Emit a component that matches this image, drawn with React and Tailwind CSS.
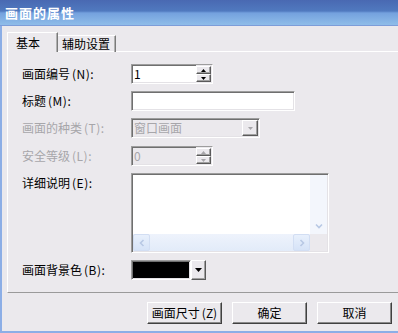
import React from "react";

const FONT = { fontFamily: '"Noto Sans CJK SC", "Noto Sans", sans-serif' };

const sunken =
  "border border-t-[#9d9d9d] border-l-[#9d9d9d] border-b-white border-r-white shadow-[inset_1px_1px_0_#6f6f6f,inset_-1px_-1px_0_#e4e2e6]";
const raised =
  "border border-t-white border-l-white border-b-[#5a5a5a] border-r-[#5a5a5a] shadow-[inset_-1px_-1px_0_#a0a0a0]";

function Tri({ up, color = "#000" }) {
  return (
    <svg width="5" height="3" viewBox="0 0 5 3">
      {up ? (
        <polygon points="0,3 5,3 2.5,0" fill={color} />
      ) : (
        <polygon points="0,0 5,0 2.5,3" fill={color} />
      )}
    </svg>
  );
}

function Spinner({ value, disabled }) {
  return (
    <div className={`flex w-[82px] h-[20px] ${sunken} ${disabled ? "bg-[#ebe9ed]" : "bg-white"}`}>
      <div
        className={`flex-1 pl-[2px] text-[12px] leading-[18px] ${disabled ? "text-[#a7a6aa]" : "text-black"}`}
      >
        {value}
      </div>
      <div className="w-[16px] flex flex-col bg-[#ebe9ed] py-[1px] pr-[1px]">
        <div className={`flex-1 flex items-center justify-center ${raised}`}>
          <Tri up color={disabled ? "#a7a6aa" : "#000"} />
        </div>
        <div className={`flex-1 flex items-center justify-center ${raised}`}>
          <Tri color={disabled ? "#a7a6aa" : "#000"} />
        </div>
      </div>
    </div>
  );
}

function Label({ text, keyc, disabled, top }) {
  return (
    <div
      className={`w-[109px] shrink-0 text-[12px] leading-[14px] ${top ? "pt-[3px]" : "self-center"} ${
        disabled ? "text-[#a7a6aa]" : "text-black"
      }`}
    >
      {text}
      <span className="ml-[2px] tracking-[0.5px]">({keyc}):</span>
    </div>
  );
}

function Chev({ dir }) {
  return (
    <svg width="8" height="8" viewBox="0 0 8 8">
      {dir === "l" ? (
        <polyline points="5.5,1 2.5,4 5.5,7" fill="none" stroke="#b8c8e4" strokeWidth="1.6" />
      ) : (
        <polyline points="2.5,1 5.5,4 2.5,7" fill="none" stroke="#b8c8e4" strokeWidth="1.6" />
      )}
    </svg>
  );
}

function Button({ children, w = "w-[75px]" }) {
  return (
    <div
      className={`${w} h-[22px] flex items-center justify-center text-[12px] text-black bg-[#ebe9ed] border border-t-white border-l-white border-b-[#404040] border-r-[#404040] shadow-[inset_-1px_-1px_0_#8a8a8a]`}
    >
      {children}
    </div>
  );
}

export default function App() {
  return (
    <div
      className="w-[398px] h-[333px] overflow-hidden bg-[#ebe9ed] flex flex-col"
      style={FONT}
    >
      {/* title bar */}
      <div className="h-[26px] shrink-0 flex items-center pl-[5px] border-b border-[#7d9dd9] bg-[linear-gradient(to_bottom,#4969b2_0%,#5079bf_44%,#74a1de_52%,#8fbde9_100%)]">
        <span className="text-white font-bold text-[13px] tracking-[1px] leading-none">画面的属性</span>
      </div>

      <div className="flex-1 flex">
        <div className="w-[2px] bg-[#8caee6] shrink-0" />
        <div className="flex-1 flex flex-col">
          {/* tabs */}
          <div className="flex items-end ml-[5px] mt-[6px] -mb-px relative z-10">
            <div className="w-[51px] h-[20px] pl-[8px] pt-[2px] text-[12px] leading-[16px] text-black bg-[#ebe9ed] border-t border-l border-white border-r border-r-[#7a7a7a] shadow-[inset_-1px_0_0_#b0b0b0]">
              基本
            </div>
            <div className="w-[58px] h-[17px] pl-[4px] text-[12px] leading-[16px] text-black border-t border-white border-r border-r-[#7a7a7a] shadow-[inset_-1px_0_0_#b0b0b0]">
              辅助设置
            </div>
          </div>

          {/* panel */}
          <div className="ml-[5px] -mr-[10px] h-[242px] border-t border-l border-white border-b border-b-[#9a9a9a] flex flex-col pl-[14px]">
            <div className="flex mt-[12px] h-[20px]">
              <Label text="画面编号" keyc="N" />
              <Spinner value="1" />
            </div>
            <div className="flex mt-[7px] h-[20px]">
              <Label text="标题" keyc="M" />
              <div className={`w-[164px] h-[20px] bg-white ${sunken}`} />
            </div>
            <div className="flex mt-[7px] h-[20px]">
              <Label text="画面的种类" keyc="T" disabled />
              <div className={`w-[129px] h-[20px] flex bg-[#ebe9ed] ${sunken}`}>
                <div className="flex-1 pl-[2px] text-[12px] leading-[18px] text-[#a7a6aa]">窗口画面</div>
                <div className={`w-[16px] my-[1px] mr-[1px] flex items-center justify-center ${raised}`}>
                  <Tri color="#a7a6aa" />
                </div>
              </div>
            </div>
            <div className="flex mt-[8px] h-[20px]">
              <Label text="安全等级" keyc="L" disabled />
              <Spinner value="0" disabled />
            </div>
            <div className="flex mt-[7px] h-[80px]">
              <Label text="详细说明" keyc="E" top />
              <div className={`w-[198px] h-[80px] bg-white flex flex-col ${sunken}`}>
                <div className="flex-1 flex">
                  <div className="flex-1" />
                  <div className="w-[17px] mr-[1px] mt-[1px] flex flex-col justify-end items-center bg-[#f3f6fc]">
                    <div className="w-[17px] h-[17px] flex items-center justify-center">
                      <svg width="8" height="8" viewBox="0 0 8 8">
                        <polyline points="1,2.5 4,5.5 7,2.5" fill="none" stroke="#b8c8e4" strokeWidth="1.6" />
                      </svg>
                    </div>
                  </div>
                </div>
                <div className="h-[17px] mx-[1px] mb-[1px] flex bg-[linear-gradient(to_bottom,#eef3fc,#e2ebf9)]">
                  <div className="w-[17px] h-[17px] rounded-[2px] border border-[#d2def3] bg-[linear-gradient(to_bottom,#e8f0fc,#d6e3f7)] flex items-center justify-center">
                    <Chev dir="l" />
                  </div>
                  <div className="flex-1" />
                  <div className="w-[17px] h-[17px] rounded-[2px] border border-[#d2def3] bg-[linear-gradient(to_bottom,#e8f0fc,#d6e3f7)] flex items-center justify-center">
                    <Chev dir="r" />
                  </div>
                  <div className="w-[17px] bg-[#ebe9ed]" />
                </div>
              </div>
            </div>
            <div className="flex mt-[7px] h-[20px]">
              <Label text="画面背景色" keyc="B" />
              <div className={`w-[60px] h-[20px] bg-black ${sunken}`} />
              <div className={`w-[15px] h-[20px] flex items-center justify-center bg-[#ebe9ed] ${raised}`}>
                <svg width="7" height="4" viewBox="0 0 7 4">
                  <polygon points="0,0 7,0 3.5,4" fill="#000" />
                </svg>
              </div>
            </div>
          </div>

          {/* buttons */}
          <div className="flex justify-end gap-[10px] pr-[6px] mt-[9px]">
            <Button>
              画面尺寸<span className="ml-[2px]">(Z)</span>
            </Button>
            <Button>确定</Button>
            <Button>取消</Button>
          </div>
          <div className="flex-1" />
        </div>
      </div>
      <div className="h-[2px] shrink-0 bg-[#8caee6]" />
    </div>
  );
}
